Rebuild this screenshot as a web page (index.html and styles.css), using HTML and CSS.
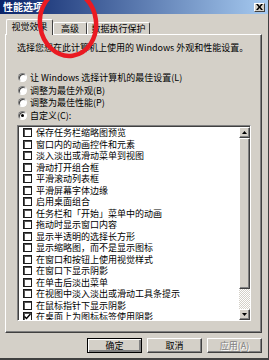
FILE: index.html
```html
<!DOCTYPE html>
<html lang="zh-CN">
    <head>
        <meta charset="UTF-8">
        <title>性能选项</title>
        <link rel="stylesheet" href="styles.css">
    </head>
    <body>
        <div class="dialog">
            <div class="titlebar">
                <span class="title">性能选项</span>
                <span class="close-btn">
                    <svg width="7" height="6" viewBox="0 0 7 6"><path d="M0 0h2l1.5 2 1.5-2h2l-2.5 3 2.5 3h-2l-1.5-2-1.5 2h-2l2.5-3z" fill="#000"/></svg>
                </span>
            </div>

            <div class="tabs">
                <div class="tab tab-active">视觉效果</div>
                <div class="tab tab-adv">高级</div>
                <div class="tab tab-dep">数据执行保护</div>
            </div>

            <div class="panel">
                <p class="desc">选择您想在此计算机上使用的 Windows 外观和性能设置。</p>

                <div class="radios">
                    <div class="radio-row"><span class="radio"></span>让 Windows 选择计算机的最佳设置(L)</div>
                    <div class="radio-row"><span class="radio"></span>调整为最佳外观(B)</div>
                    <div class="radio-row"><span class="radio"></span>调整为最佳性能(P)</div>
                    <div class="radio-row"><span class="radio radio-on"></span>自定义(C):</div>
                </div>

                <div class="listbox">
                    <div class="items">
                        <div class="item"><span class="check"></span>保存任务栏缩略图预览</div>
                        <div class="item"><span class="check"></span>窗口内的动画控件和元素</div>
                        <div class="item"><span class="check"></span>淡入淡出或滑动菜单到视图</div>
                        <div class="item"><span class="check"></span>滑动打开组合框</div>
                        <div class="item"><span class="check"></span>平滑滚动列表框</div>
                        <div class="item"><span class="check"></span>平滑屏幕字体边缘</div>
                        <div class="item"><span class="check"></span>启用桌面组合</div>
                        <div class="item"><span class="check"></span>任务栏和「开始」菜单中的动画</div>
                        <div class="item"><span class="check"></span>拖动时显示窗口内容</div>
                        <div class="item"><span class="check"></span>显示半透明的选择长方形</div>
                        <div class="item"><span class="check"></span>显示缩略图，而不是显示图标</div>
                        <div class="item"><span class="check"></span>在窗口和按钮上使用视觉样式</div>
                        <div class="item"><span class="check"></span>在窗口下显示阴影</div>
                        <div class="item"><span class="check"></span>在单击后淡出菜单</div>
                        <div class="item"><span class="check"></span>在视图中淡入淡出或滑动工具条提示</div>
                        <div class="item"><span class="check"></span>在鼠标指针下显示阴影</div>
                        <div class="item"><span class="check check-on"><svg width="7" height="7" viewBox="0 0 7 7"><path d="M0.5 3.5l2 2 4-4.5" stroke="#000" stroke-width="1.4" fill="none"/></svg></span>在桌面上为图标标签使用阴影</div>
                    </div>
                    <div class="scrollbar">
                        <span class="sb-btn"><svg width="5" height="3" viewBox="0 0 5 3"><path d="M0 3h5l-2.5-3z" fill="#000"/></svg></span>
                        <span class="sb-thumb"></span>
                        <span class="sb-track"></span>
                        <span class="sb-btn"><svg width="5" height="3" viewBox="0 0 5 3"><path d="M0 0h5l-2.5 3z" fill="#000"/></svg></span>
                    </div>
                </div>
            </div>

            <div class="buttons">
                <button class="btn btn-default">确定</button>
                <button class="btn">取消</button>
                <button class="btn btn-disabled">应用(A)</button>
            </div>

            <!-- 红圈标注 -->
            <svg class="mark" width="269" height="70" viewBox="0 0 269 70">
                <ellipse cx="68" cy="23" rx="28" ry="33" transform="rotate(-8 68 23)" fill="none" stroke="#ea1a22" stroke-width="4.5"/>
            </svg>
        </div>
    </body>
</html>
```

FILE: styles.css
```css
body {
    margin: 0;
    padding: 0;
    font-family: "Noto Sans CJK SC", "Liberation Sans", sans-serif;
    font-size: 9px;
    color: #000;
}
.dialog {
    position: relative;
    width: 269px;
    height: 360px;
    box-sizing: border-box;
    background: #d4d0c8;
    border-right: 1px solid #404040;
    border-bottom: 2px solid #404040;
    overflow: hidden;
}
.titlebar {
    height: 14px;
    display: flex;
    align-items: center;
    justify-content: space-between;
    padding: 0 3px 0 3px;
    background: linear-gradient(to right, #0a246a, #a6caf0);
}
.title {
    color: #fff;
    font-weight: bold;
    font-size: 10px;
    line-height: 14px;
}
.close-btn {
    width: 11px;
    height: 9px;
    box-sizing: border-box;
    display: flex;
    align-items: center;
    justify-content: center;
    background: #d4d0c8;
    border: 1px solid;
    border-color: #fff #404040 #404040 #fff;
}
.tabs {
    display: flex;
    align-items: flex-end;
    height: 15px;
    margin-top: 5px;
    padding-left: 6px;
}
.tab {
    height: 12px;
    box-sizing: border-box;
    line-height: 11px;
    text-align: center;
    border: 1px solid;
    border-color: #fff #404040 transparent #fff;
    border-bottom: none;
    border-radius: 2px 2px 0 0;
}
.tab-active {
    position: relative;
    z-index: 1;
    width: 47px;
    height: 16px;
    margin-bottom: -1px;
    line-height: 14px;
    background: #d4d0c8;
}
.tab-adv {
    width: 34px;
}
.tab-dep {
    width: 63px;
}
.panel {
    width: 257px;
    height: 299px;
    margin-left: 5px;
    box-sizing: border-box;
    border: 1px solid;
    border-color: #fff #404040 #404040 #fff;
    box-shadow: inset -1px -1px 0 #808080;
}
.desc {
    margin: 7px 0 0 11px;
    line-height: 11px;
    white-space: nowrap;
}
.radios {
    margin-top: 18px;
    padding-left: 12px;
}
.radio-row {
    height: 12.7px;
    display: flex;
    align-items: center;
    gap: 3px;
    white-space: nowrap;
}
.radio {
    width: 9px;
    height: 9px;
    box-sizing: border-box;
    border-radius: 50%;
    background: #fff;
    border: 1px solid;
    border-color: #808080 #fff #fff #808080;
    box-shadow: inset 1px 1px 0 #404040;
    display: flex;
    align-items: center;
    justify-content: center;
}
.radio-on::after {
    content: "";
    width: 3px;
    height: 3px;
    border-radius: 50%;
    background: #000;
}
.listbox {
    display: flex;
    width: 234px;
    height: 196px;
    margin: 3px 0 0 11px;
    box-sizing: border-box;
    background: #fff;
    border: 1px solid;
    border-color: #808080 #fff #fff #808080;
    box-shadow: inset 1px 1px 0 #404040;
    padding: 1px 0 0 1px;
}
.items {
    flex: 1;
    overflow: hidden;
    padding-left: 4px;
}
.item {
    height: 11.5px;
    display: flex;
    align-items: center;
    gap: 4px;
    white-space: nowrap;
}
.check {
    width: 9px;
    height: 9px;
    flex: none;
    box-sizing: border-box;
    border: 1px solid #1a1a1a;
    box-shadow: inset 1px 1px 0 #555;
    background: #fff;
    display: flex;
    align-items: center;
    justify-content: center;
}
.scrollbar {
    width: 11px;
    display: flex;
    flex-direction: column;
}
.sb-btn, .sb-thumb {
    box-sizing: border-box;
    background: #d4d0c8;
    border: 1px solid;
    border-color: #fff #404040 #404040 #fff;
    box-shadow: inset -1px -1px 0 #808080;
}
.sb-btn {
    height: 11px;
    display: flex;
    align-items: center;
    justify-content: center;
}
.sb-thumb {
    height: 151px;
}
.sb-track {
    flex: 1;
    background: repeating-conic-gradient(#d4d0c8 0 25%, #fff 0 50%) 0 0 / 2px 2px;
}
.buttons {
    display: flex;
    justify-content: flex-end;
    gap: 5px;
    margin-top: 5px;
    padding-right: 6px;
}
.btn {
    width: 55px;
    height: 15px;
    padding: 0;
    box-sizing: border-box;
    font-family: inherit;
    font-size: 9px;
    line-height: 12px;
    color: #000;
    background: #d4d0c8;
    border: 1px solid;
    border-color: #fff #404040 #404040 #fff;
    box-shadow: inset -1px -1px 0 #808080;
}
.btn-default {
    border-color: #000;
    box-shadow: inset 1px 1px 0 #fff, inset -2px -2px 0 #808080;
}
.btn-disabled {
    color: #808080;
    text-shadow: 1px 1px 0 #fff;
}
.mark {
    position: absolute;
    left: 0;
    top: 0;
    z-index: 5;
    pointer-events: none;
}
```
